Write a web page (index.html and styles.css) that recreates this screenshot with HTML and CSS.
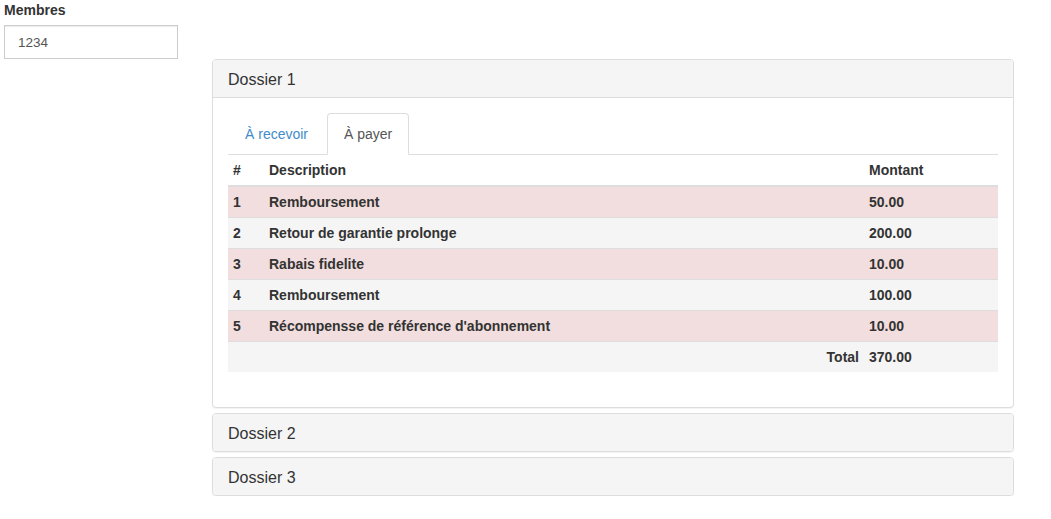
FILE: index.html
```html
<!DOCTYPE html>
<html lang="fr">
<head>
<meta charset="utf-8">
<title>Membres</title>
<link rel="stylesheet" href="styles.css">
</head>
<body>
<div class="page">
  <div class="form-group">
    <label class="label" for="membres">Membres</label>
    <input id="membres" class="input" type="text" value="1234">
  </div>
  <div class="panel-group">
    <div class="panel">
      <div class="panel-heading"><h4 class="panel-title">Dossier 1</h4></div>
      <div class="panel-body">
        <ul class="tabs">
          <li class="tab"><a class="tab-link">À recevoir</a></li>
          <li class="tab active"><a class="tab-link">À payer</a></li>
        </ul>
        <table class="table">
          <thead>
            <tr><th class="col-num">#</th><th class="col-desc">Description</th><th class="col-amt">Montant</th></tr>
          </thead>
          <tbody>
            <tr class="danger"><td>1</td><td>Remboursement</td><td>50.00</td></tr>
            <tr class="active"><td>2</td><td>Retour de garantie prolonge</td><td>200.00</td></tr>
            <tr class="danger"><td>3</td><td>Rabais fidelite</td><td>10.00</td></tr>
            <tr class="active"><td>4</td><td>Remboursement</td><td>100.00</td></tr>
            <tr class="danger"><td>5</td><td>Récompensse de référence d'abonnement</td><td>10.00</td></tr>
            <tr class="active"><td></td><td class="total-label">Total</td><td>370.00</td></tr>
          </tbody>
        </table>
      </div>
    </div>
    <div class="panel">
      <div class="panel-heading"><h4 class="panel-title">Dossier 2</h4></div>
    </div>
    <div class="panel">
      <div class="panel-heading"><h4 class="panel-title">Dossier 3</h4></div>
    </div>
  </div>
</div>
</body>
</html>
```
FILE: styles.css
```css
* { box-sizing: border-box; }
html, body { margin: 0; padding: 0; background: #fff; }
body {
  font-family: "Liberation Sans", Arial, sans-serif;
  font-size: 14px;
  line-height: 20px;
  color: #333;
}
.page { padding: 0 37px 0 4px; }
.form-group { display: flex; flex-direction: column; align-items: flex-start; }
.label { font-weight: bold; margin-bottom: 5px; display: block; }
.input {
  width: 174px;
  height: 34px;
  padding: 6px 13px;
  font: 13.5px/20px "Liberation Sans", Arial, sans-serif;
  color: #555;
  border: 1px solid #ccc;
  border-radius: 0;
  background: #fff;
  box-shadow: inset 0 1px 1px rgba(0,0,0,0.075);
  outline: none;
}
.panel-group { margin-left: 208px; display: flex; flex-direction: column; gap: 5px; }
.panel {
  border: 1px solid #ddd;
  border-radius: 4px;
  background: #fff;
  box-shadow: 0 1px 1px rgba(0,0,0,0.05);
  overflow: hidden;
}
.panel-heading {
  background: #f5f5f5;
  padding: 11px 15px 9px;
}
.panel-body { border-top: 1px solid #ddd; padding: 15px; }
.panel-title { margin: 0; font-size: 16px; line-height: 17px; font-weight: normal; color: #333; }
.tabs {
  list-style: none;
  margin: 0;
  padding: 0;
  display: flex;
  border-bottom: 1px solid #ddd;
}
.tab { margin-right: 2px; margin-bottom: -1px; }
.tab-link {
  display: block;
  padding: 10px 16px;
  line-height: 20px;
  color: #428bca;
  border: 1px solid transparent;
  border-radius: 4px 4px 0 0;
  text-decoration: none;
}
.tab.active .tab-link {
  color: #555;
  background: #fff;
  border-color: #ddd #ddd transparent;
}
.table {
  width: 100%;
  border-collapse: collapse;
  border-spacing: 0;
  margin-bottom: 20px;
}
.table th, .table td {
  padding: 5px;
  line-height: 20px;
  text-align: left;
  font-weight: bold;
  vertical-align: top;
}
.table thead th { border-bottom: 2px solid #ddd; }
.table tbody td { border-top: 1px solid #ddd; }
.table tbody tr:first-child td { border-top: 0; }
.col-num { width: 36px; }
.col-amt { width: 134px; }
.total-label { text-align: right !important; }
tr.danger td { background: #f2dede; }
tr.active td { background: #f5f5f5; }
```
